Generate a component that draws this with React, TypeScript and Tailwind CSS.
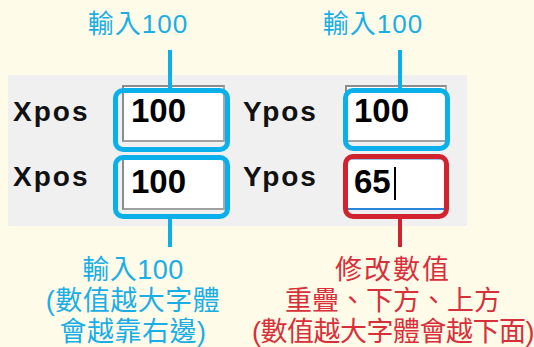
import React from 'react';

const sans = { fontFamily: '"Liberation Sans", "Noto Sans CJK TC", sans-serif' };

function Ring({ color, className, up, down }: { color: 'blue' | 'red'; className: string; up?: boolean; down?: boolean }) {
  const border = color === 'blue' ? 'border-[#0bb0ea]' : 'border-[#d1232d]';
  const line = color === 'blue' ? 'bg-[#0bb0ea]' : 'bg-[#d1232d]';
  return (
    <div className={`absolute border-[5px] rounded-[10px] ${border} ${className}`}>
      {up && <div className={`absolute left-[50px] top-[-43px] w-[4px] h-[38px] ${line}`} />}
      {down && <div className={`absolute left-[50px] top-[calc(100%+5px)] w-[4px] h-[28px] ${line}`} />}
    </div>
  );
}

function Field({ value, focused, className }: { value: string; focused?: boolean; className: string }) {
  return (
    <div
      className={`relative flex items-center pb-[6px] pl-[7px] bg-white border-2 ${
        focused
          ? 'border-[#9fc4ea] border-b-[#2a86dc]'
          : 'border-t-[#8c8c8c] border-l-[#8c8c8c] border-r-[#a9a9a9] border-b-[#a0a0a0]'
      } ${className}`}
    >
      <span className="text-[33px] leading-[33px] font-bold text-black" style={sans}>
        {value}
      </span>
      {focused && <span className="w-[2px] h-[33px] bg-black ml-[3px] mb-[-4px]" />}
    </div>
  );
}

function Label({ text, className }: { text: string; className: string }) {
  return (
    <div className={className}>
      <span className="text-[28px] leading-[30px] font-bold tracking-[2px] text-[#111]" style={sans}>
        {text}
      </span>
    </div>
  );
}

export default function App() {
  return (
    <div className="w-[534px] h-[347px] overflow-hidden bg-[#fffbe9]" style={sans}>
      {/* top notes */}
      <div className="h-[75px] pt-[8px] pl-[38px] flex gap-[35px]">
        <div className="w-[200px] text-center text-[26px] leading-[32px] tracking-[1px] text-[#1aaee6]">輸入100</div>
        <div className="w-[200px] text-center text-[26px] leading-[32px] tracking-[1px] text-[#1aaee6]">輸入100</div>
      </div>

      {/* form panel */}
      <div className="ml-[8px] w-[459px] h-[151px] bg-[#f0f0f0]">
        <div className="flex items-start h-[73px]">
          <Label text="Xpos" className="w-[114px] pl-[5px] pt-[22px]" />
          <div className="relative mt-[10px]">
            <Field value="100" className="w-[103px] h-[57px]" />
            <Ring color="blue" up className="left-[-9px] top-[3px] w-[117px] h-[64px]" />
          </div>
          <Label text="Ypos" className="w-[120px] pl-[18px] pt-[22px]" />
          <div className="relative mt-[10px]">
            <Field value="100" className="w-[102px] h-[57px]" />
            <Ring color="blue" up className="left-[-2px] top-[3px] w-[107px] h-[63px]" />
          </div>
        </div>
        <div className="flex items-start h-[78px]">
          <Label text="Xpos" className="w-[114px] pl-[5px] pt-[14px]" />
          <div className="relative mt-[10px]">
            <Field value="100" className="w-[103px] h-[52px]" />
            <Ring color="blue" down className="left-[-9px] top-[-3px] w-[117px] h-[64px]" />
          </div>
          <Label text="Ypos" className="w-[120px] pl-[18px] pt-[14px]" />
          <div className="relative mt-[10px]">
            <Field value="65" focused className="w-[102px] h-[52px]" />
            <Ring color="red" down className="left-[-2px] top-[-4px] w-[106px] h-[65px]" />
          </div>
        </div>
      </div>

      {/* bottom notes */}
      <div className="mt-[29px] pl-[23px] flex gap-[9px] text-[27px] leading-[31px] whitespace-nowrap">
        <div className="w-[220px] text-center tracking-[0.5px] text-[#1aaee6]">
          <div>輸入100</div>
          <div>(數值越大字體</div>
          <div>會越靠右邊)</div>
        </div>
        <div className="w-[282px] text-center text-[#d8303a]">
          <div className="tracking-[2px]">修改數值</div>
          <div>重疊、下方、上方</div>
          <div className="tracking-[-0.5px]">(數值越大字體會越下面)</div>
        </div>
      </div>
    </div>
  );
}
